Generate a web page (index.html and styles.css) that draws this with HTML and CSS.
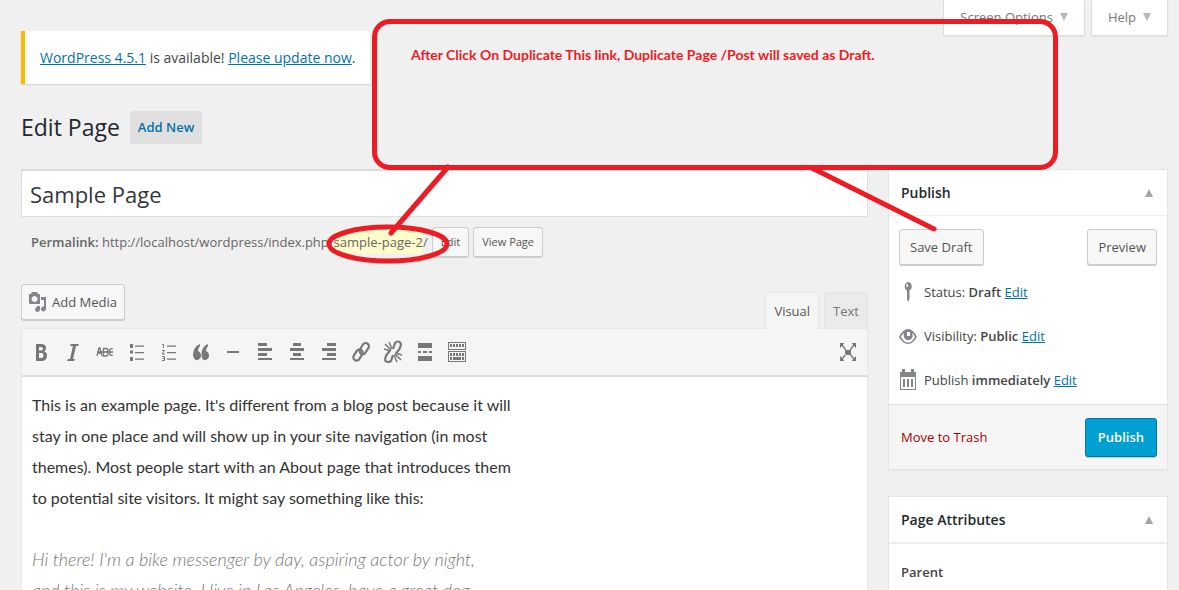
FILE: index.html
```html
<!DOCTYPE html>
<html lang="en">
<head>
<meta charset="utf-8">
<title>Edit Page</title>
<link rel="stylesheet" href="styles.css">
</head>
<body>
<nav class="screen-meta">
  <button class="meta-tab" type="button">Screen Options <span class="arrow down"></span></button>
  <button class="meta-tab" type="button">Help <span class="arrow down"></span></button>
</nav>
<div class="wrap">
  <p class="notice"><a href="#">WordPress 4.5.1</a> is available! <a href="#">Please update now</a>.</p>
  <header class="heading"><h1>Edit Page</h1><a class="add-new" href="#">Add New</a></header>
  <div class="columns">
    <main class="main">
      <input class="title" type="text" aria-label="Title" value="Sample Page">
      <div class="permalink">
        <span><strong>Permalink:</strong> http://localhost/wordpress/index.php/<mark>sample-page-2</mark>/</span>
        <button class="btn small" type="button">Edit</button>
        <button class="btn small" type="button">View Page</button>
      </div>
      <div class="editor-tools">
        <button class="btn media" type="button">
          <svg width="20" height="22" viewBox="0 0 20 22" fill="#82878c"><path fill-rule="evenodd" d="M1 3h2l1-2h5l1 2h1q1 0 1 1v9H2q-1 0-1-1zM6.500 5a3 3 0 1 0 .1 0z"/><path d="M13 6h5v12a2.500 2.500 0 1 1-2-2.500V9h-3zM9 15h3v3.500A2.500 2.500 0 1 1 9 16z"/></svg>
          Add Media
        </button>
        <div class="tabs"><button class="tab active" type="button">Visual</button><button class="tab" type="button">Text</button></div>
      </div>
      <section class="editor">
        <div class="toolbar">
          <button type="button" aria-label="Bold"><svg viewBox="0 0 24 24"><path fill-rule="evenodd" d="M7 4h5q5 0 5 4 0 3-2 3.500 3 .5 3 4Q18 21 12 21H7zm3 3v3.500h2q2 0 2-1.800T12 7zm0 6v5h2q2.500 0 2.500-2.500T13 13z"/></svg></button>
          <button type="button" aria-label="Italic"><svg viewBox="0 0 24 24"><path d="M10 4h8l-1 2h-2l-3 13h2l-1 2H6l1-2h2l3-13H9z"/></svg></button>
          <button type="button" aria-label="Strikethrough"><svg viewBox="0 0 24 24"><g fill="none" stroke="#777" stroke-width="1.300"><path d="M4 16l2-8h1l2 8M5 13h3M10.500 16V8.500h2.500q2 0 2 1.700T13 12q2 0 2 2t-2 2zM20 9q-3.500-1.500-3.500 3t3.500 3M4 12h16"/></g></svg></button>
          <button type="button" aria-label="Bulleted list"><svg viewBox="0 0 24 24"><path d="M5 4h3v4H5zM5 10.500h3v3H5zM5 17h3v4H5zM10 5.500h9v1.300h-9zM10 12h9v1.300h-9zM10 18.500h9v1.300h-9z"/></svg></button>
          <button type="button" aria-label="Numbered list"><svg viewBox="0 0 24 24"><path d="M10 5.500h9v1.300h-9zM10 12h9v1.300h-9zM10 18.500h9v1.300h-9z"/><path fill="none" stroke="#777" stroke-width="1" d="M5 4.500h1.500V8M5 10.500h2.500l-2.500 3.500h3M5 16.500h2.500v4H5M5.500 18.500h2"/></svg></button>
          <button type="button" aria-label="Quote"><svg viewBox="0 0 24 24"><path d="M11 4v2q-2 2-2 5 3 1 3 4.500T8.500 20 4 15Q4 7 11 4zM19 4v2q-2 2-2 5 3 1 3 4.500T16.500 20 12.500 15Q12 7 19 4z"/></svg></button>
          <button type="button" aria-label="Horizontal line"><svg viewBox="0 0 24 24"><path d="M6 11h12v2H6z"/></svg></button>
          <button type="button" aria-label="Align left"><svg viewBox="0 0 24 24"><path d="M5 3h9v3H5zM5 8h14v3H5zM5 13h9v3H5zM5 18h14v2H5z"/></svg></button>
          <button type="button" aria-label="Align center"><svg viewBox="0 0 24 24"><path d="M8 3h8v3H8zM5 8h14v3H5zM8 13h8v3H8zM5 18h14v2H5z"/></svg></button>
          <button type="button" aria-label="Align right"><svg viewBox="0 0 24 24"><path d="M10 3h9v3h-9zM5 8h14v3H5zM10 13h9v3h-9zM5 18h14v2H5z"/></svg></button>
          <button type="button" aria-label="Insert link"><svg viewBox="0 0 24 24"><g fill="none" stroke="#777" stroke-width="2.200"><rect x="8.800" y="1.500" width="6.400" height="12" rx="3.200" transform="translate(3 1) rotate(32 12 8)"/><rect x="8.800" y="10" width="6.400" height="12" rx="3.200" transform="translate(-3 -1) rotate(32 12 16)"/></g></svg></button>
          <button type="button" aria-label="Remove link"><svg viewBox="0 0 24 24"><g fill="none" stroke="#777" stroke-width="2.200"><path d="M12 9l2-6q3-3 5.500 0 1 2-1 6l-3 4M12 15l-2 6q-3 2-5.500 0-1-2 1-6l3-4"/><path stroke-width="1.500" d="M4 4l6 6M8 2l3 7M3 9l7 2M20 20l-6-6M16 22l-3-7M21 15l-7-2"/></g></svg></button>
          <button type="button" aria-label="Read more"><svg viewBox="0 0 24 24"><path d="M5 3h14v5H5zM5 11h3v2H5zM10 11h4v2h-4zM16 11h3v2h-3zM5 16h14v5H5z"/></svg></button>
          <button type="button" aria-label="Toolbar toggle"><svg viewBox="0 0 24 24"><path fill-rule="evenodd" d="M3 2h18v8H3zm1 1v6h16V3zM3 11h18v11H3zm1 1v9h16v-9z"/><path d="M5 4h2v3H5zM8 4h2v3H8zM11 4h2v3h-2zM14 4h2v3h-2zM17 4h2v3h-2zM5 13h2v3H5zM8 13h2v3H8zM11 13h2v3h-2zM14 13h2v3h-2zM17 13h2v3h-2zM5 17h2v3H5zM8 17h8v3H8zM17 17h2v3h-2z"/></svg></button>
          <button class="full" type="button" aria-label="Distraction-free writing"><svg viewBox="0 0 24 24"><path d="M4 3h4L7 5l3 4v1H9L6 6 4 8zM20 3h-4l1 2-3 4v1h1l3-4 2 2zM4 21h4l-1-2 3-4v-1H9l-3 4-2-2zM20 21h-4l1-2-3-4v-1h1l3 4 2-2zM9 10h6v5H9z"/></svg></button>
        </div>
        <article class="content">
          <p>This is an example page. It's different from a blog post because it will<br>stay in one place and will show up in your site navigation (in most<br>themes). Most people start with an About page that introduces them<br>to potential site visitors. It might say something like this:</p>
          <blockquote>Hi there! I'm a bike messenger by day, aspiring actor by night,<br>and this is my website. I live in Los Angeles, have a great dog</blockquote>
        </article>
      </section>
    </main>
    <aside class="side">
      <section class="box">
        <h2>Publish <span class="arrow up"></span></h2>
        <div class="actions"><button class="btn" type="button">Save Draft</button><button class="btn" type="button">Preview</button></div>
        <p class="row"><svg width="18" height="22" viewBox="0 0 18 22" fill="#82878c"><path fill-rule="evenodd" d="M9 1a4 4.500 0 0 1 1.500 8.500V18L9 21l-1-3V9.500A4 4.500 0 0 1 9 1zM7.500 3v3H9V3z"/></svg><span>Status: <strong>Draft</strong> <a href="#">Edit</a></span></p>
        <p class="row"><svg width="18" height="22" viewBox="0 0 18 22" fill="#82878c"><path fill-rule="evenodd" d="M0 12Q4 4 9 4t9 8q-4 7-9 7T0 12zm2 0q3 5.500 7 5.500T16 12q-1-3-3-4 1 2 .5 4A4.500 5 0 0 1 5 8Q3 9 2 12zm6-5v4h3V7z"/></svg><span>Visibility: <strong>Public</strong> <a href="#">Edit</a></span></p>
        <p class="row"><svg width="18" height="22" viewBox="0 0 18 22" fill="#82878c"><path fill-rule="evenodd" d="M1 3h2V0h3v3h6V0h3v3h2v18H1zm1 5v12h14V8zM4 10h2v8H4zM8 10h2v8H8zM12 10h2v8h-2z"/></svg><span>Publish <strong>immediately</strong> <a href="#">Edit</a></span></p>
        <footer class="publishing"><a class="trash" href="#">Move to Trash</a><button class="btn primary" type="button">Publish</button></footer>
      </section>
      <section class="box">
        <h2 class="ruled">Page Attributes <span class="arrow up"></span></h2>
        <p class="parent">Parent</p>
      </section>
    </aside>
  </div>
</div>
<div class="callout">After Click On Duplicate This link, Duplicate Page /Post will saved as Draft.</div>
<svg class="marks" width="1179" height="590" viewBox="0 0 1179 590" fill="none" stroke="#ed1c24" stroke-width="5" stroke-linecap="round"><ellipse cx="388" cy="244" rx="59" ry="17"/><path d="M448 167L391 233M812 168L934 229"/></svg>
</body>
</html>
```
FILE: styles.css
```css
* { box-sizing: border-box; }
body {
  margin: 0;
  height: 100vh;
  overflow: hidden;
  position: relative;
  background: #f0f0f0;
  color: #444;
  font: 13px/20px "Open Sans", sans-serif;
}
h1, h2, p, blockquote { margin: 0; }
a { color: #0073aa; }
strong { font-weight: 600; }
button { font: inherit; cursor: pointer; }

.screen-meta {
  display: flex;
  justify-content: flex-end;
  gap: 6px;
  height: 31px;
  padding-right: 11px;
}
.meta-tab {
  display: flex;
  align-items: center;
  gap: 7px;
  height: 36px;
  padding: 0 16px 2px;
  background: #fff;
  border: 1px solid #ddd;
  border-top: 0;
  box-shadow: 0 1px 1px rgba(0, 0, 0, .05);
  color: #777;
}
.arrow {
  border: 4px solid transparent;
  border-top-width: 0;
  border-bottom-width: 0;
}
.arrow.down { border-top: 8px solid #b4b9be; }
.arrow.up { border-bottom: 8px solid #a0a5aa; }

.wrap { padding: 0 11px 0 21px; }
.notice {
  width: fit-content;
  padding: 17px 15px 16px;
  background: #fff;
  border-left: 4px solid #ffba00;
  box-shadow: 0 1px 1px rgba(0, 0, 0, .1);
  font-size: 14px;
}
.heading {
  display: flex;
  align-items: center;
  gap: 10px;
  padding: 27px 0 25px;
}
h1 { font-size: 23px; line-height: 33px; font-weight: 400; color: #23282d; }
.add-new {
  padding: 0 8px;
  line-height: 33px;
  background: #e0e0e0;
  border-radius: 2px;
  font-weight: 600;
  text-decoration: none;
}

.columns { display: flex; gap: 20px; }
.main { flex: 1; min-width: 0; }
.side { width: 280px; }
.title {
  display: block;
  width: 100%;
  height: 48px;
  padding: 0 8px;
  border: 1px solid #ddd;
  border-top-width: 2px;
  background: #fff;
  color: #32373c;
  font: 22px/30px "Open Sans", sans-serif;
}
.permalink {
  display: flex;
  align-items: center;
  gap: 4px;
  padding: 10px 10px 27px;
  color: #666;
}
mark { background: #fffbcc; color: inherit; padding: 3px 0; }
.btn {
  height: 36px;
  padding: 0 10px;
  background: #f7f7f7;
  border: 1px solid #ccc;
  border-radius: 3px;
  box-shadow: 0 1px 0 #ccc;
  color: #555;
  white-space: nowrap;
}
.btn.small { height: 30px; padding: 0 8px; font-size: 11px; }
.btn.media { display: flex; align-items: center; gap: 4px; padding: 0 7px 0 6px; }
.btn.primary {
  height: 39px;
  padding: 0 12px;
  background: #00a0d2;
  border-color: #0073aa;
  color: #fff;
  font-weight: 600;
}
.editor-tools { display: flex; justify-content: space-between; }
.tabs { display: flex; gap: 5px; padding-top: 8px; height: 44px; }
.tab {
  height: 36px;
  padding: 0 8px;
  background: #ebebeb;
  border: 1px solid #e5e5e5;
  border-bottom: 0;
  color: #777;
}
.tab.active { position: relative; height: 37px; background: #f5f5f5; color: #555; }

.editor { border: 1px solid #e5e5e5; background: #fff; }
.toolbar {
  display: flex;
  align-items: center;
  height: 48px;
  padding: 0 3px;
  background: #f5f5f5;
  border-bottom: 2px solid #ddd;
}
.toolbar button { width: 32px; height: 32px; padding: 4px; border: 0; background: none; }
.toolbar svg { display: block; width: 24px; height: 24px; fill: #777; }
.toolbar .full { margin-left: auto; }
.content {
  padding: 12px 10px;
  color: #333;
  font: 16px/31px Lato, sans-serif;
  white-space: nowrap;
}
.content blockquote { margin-top: 31px; color: #777; font-size: 18px; font-style: italic; font-weight: 300; }

.box {
  margin-bottom: 26px;
  background: #fff;
  border: 1px solid #e5e5e5;
  box-shadow: 0 1px 1px rgba(0, 0, 0, .04);
}
h2 {
  display: flex;
  align-items: center;
  justify-content: space-between;
  height: 46px;
  padding: 0 14px 0 12px;
  border-bottom: 1px solid #eee;
  color: #23282d;
  font-size: 14px;
  font-weight: 600;
}
h2.ruled { height: 47px; border-bottom-width: 2px; }
.actions { display: flex; justify-content: space-between; padding: 13px 10px 5px; }
.row { display: flex; align-items: center; gap: 7px; height: 44px; padding-left: 10px; }
.publishing {
  display: flex;
  align-items: center;
  justify-content: space-between;
  margin-top: 2px;
  height: 65px;
  padding: 0 10px 0 12px;
  background: #f5f5f5;
  border-top: 1px solid #ddd;
}
.trash { color: #a00; text-decoration: none; }
.parent { padding: 18px 12px 30px; font-weight: 600; }

.callout {
  position: absolute;
  left: 372px;
  top: 19px;
  width: 686px;
  height: 151px;
  padding: 21px 34px;
  border: 5px solid #ed1c24;
  border-radius: 18px;
  color: #ed1c24;
  font: bold 14px/20px Lato, sans-serif;
}
.marks { position: absolute; left: 0; top: 0; pointer-events: none; }
```
